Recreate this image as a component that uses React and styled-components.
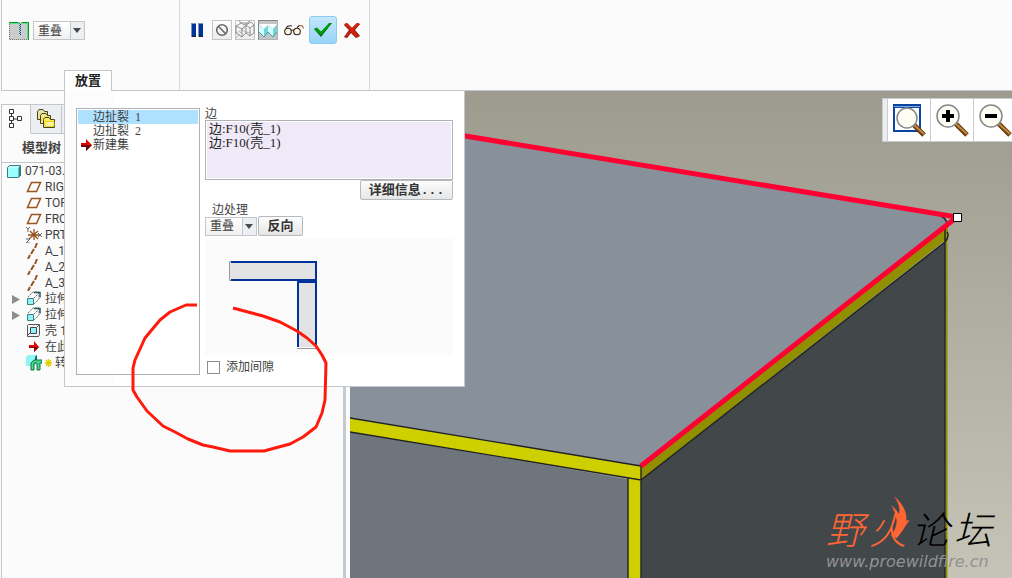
import React from "react";
import styled, { createGlobalStyle, css } from "styled-components";

const line = "#c3c7cc";
const sans = `Roboto, "Noto Sans CJK SC", sans-serif`;
const song = `"Liberation Serif", "Noto Sans CJK SC", serif`;

const Global = createGlobalStyle`
  *, *::before, *::after { box-sizing: border-box; }
  body { margin: 0; background: #fbfbfb; }
  button, select, input { font: inherit; color: inherit; margin: 0; }
  svg { display: block; flex: none; }
`;

const Page = styled.div`
  position: relative;
  display: flex;
  flex-direction: column;
  min-height: 100vh;
  overflow: hidden;
  padding-left: 1px;
  background: #fbfbfb;
  color: #3f3f3f;
  font: 12px/16px ${sans};
`;

const Ribbon = styled.header`
  display: flex;
  border-bottom: 1px solid ${line};
  border-left: 1px solid ${line};
`;

const Group = styled.section`
  display: flex;
  flex-direction: column;
  justify-content: space-between;
  width: ${(p) => p.$width}px;
  height: 90px;
  padding: ${(p) => p.$pad};
  border-right: 1px solid #d6d9dc;
`;

const Controls = styled.div`
  display: flex;
  align-items: center;
  gap: ${(p) => p.$gap}px;
`;

const Tab = styled.button`
  align-self: flex-start;
  width: 48px;
  height: 21px;
  margin: 0 0 -1px 55px;
  padding: 0;
  border: 1px solid ${line};
  border-bottom: 0;
  background: #fff;
  color: #222;
  font: bold 13px/18px ${sans};
`;

const ToolButton = styled.button`
  display: flex;
  align-items: center;
  justify-content: center;
  width: ${(p) => p.$width || 20}px;
  height: 20px;
  padding: 0;
  border: 0;
  background: none;
  ${(p) =>
    p.$look === "framed" &&
    css`
      border: 1px solid #c2c6c9;
      background: linear-gradient(#fdfdfd, #ececec);
    `}
  ${(p) =>
    p.$look === "pressed" &&
    css`
      border: 1px solid #aeb2b5;
      border-top-color: #888;
      border-left-color: #888;
      background: #c3c5c6;
    `}
  ${(p) =>
    p.$look === "accept" &&
    css`
      height: 28px;
      border: 1px solid #8ccaf0;
      border-radius: 3px;
      background: linear-gradient(#c4e6fb, #97d3f8);
    `}
`;

const SelectBox = styled.span`
  display: grid;
  width: 52px;
  height: 19px;
  color: #444;
  > * { grid-area: 1 / 1; }
`;

const SelectInput = styled.select`
  appearance: none;
  padding: 0 0 0 4px;
  border: 1px solid ${line};
  border-radius: 0;
  background: linear-gradient(to right, transparent 36px, ${line} 36px, ${line} 37px, #eceef2 37px),
    linear-gradient(#fff, #f0f0f0);
  line-height: 16px;
`;

const Arrow = styled.svg`
  justify-self: end;
  align-self: center;
  margin-right: 4px;
  pointer-events: none;
`;

const Workspace = styled.main`
  position: relative;
  display: flex;
  flex: 1;
`;

const TreePanel = styled.aside`
  width: 345px;
  flex: none;
  padding-top: 13px;
  border-right: 3px solid #c6cacf;
  background: #fbfbfb;
`;

const TreeBody = styled.div`
  height: 100%;
  border-left: 1px solid ${line};
  border-top: 1px solid ${line};
`;

const TreeTabs = styled.div`
  display: flex;
  height: 29px;
`;

const TreeTab = styled.button`
  display: flex;
  align-items: center;
  justify-content: center;
  width: ${(p) => (p.$active ? 29 : 31)}px;
  padding: 0;
  border: 0;
  border-right: 1px solid ${line};
  border-bottom: 1px solid ${(p) => (p.$active ? "#fbfbfb" : line)};
  background: ${(p) => (p.$active ? "#fbfbfb" : "#eceef1")};
`;

const TreeTitle = styled.h2`
  margin: 0;
  padding: 5px 0 5px 20px;
  border-bottom: 1px solid ${line};
  color: #444;
  font: bold 13px/18px ${sans};
`;

const TreeList = styled.ul`
  margin: 0;
  padding: 0;
  list-style: none;
`;

const TreeRow = styled.li`
  display: flex;
  align-items: center;
  gap: ${(p) => (p.$root ? 4 : 3)}px;
  height: 16px;
  padding-left: ${(p) => (p.$root ? 5 : 10)}px;
  white-space: nowrap;
`;

const Twisty = styled.span`
  display: flex;
  width: 11px;
`;

const Viewport = styled.section`
  position: relative;
  flex: 1;
  min-width: 0;
  margin-left: 4px;
  overflow: hidden;
  background: linear-gradient(#9d9b8e, #c6c3b7);
`;

const Scene = styled.svg`
  position: absolute;
  inset: 0;
  width: 100%;
  height: 100%;
`;

const ViewTools = styled.div`
  position: absolute;
  top: 7px;
  right: 0;
  display: flex;
  width: 130px;
  height: 44px;
  overflow: hidden;
  border: 1px solid #c9ccd3;
  border-right: 0;
  background: #fff;
`;

const Grip = styled.span`
  flex: none;
  width: 4px;
  background: #eeeef2;
`;

const ViewButton = styled.button`
  display: flex;
  align-items: flex-start;
  flex: none;
  width: 43px;
  padding: 5px 0 0 4px;
  border: 0;
  border-left: 1px solid #c9ccd3;
  background: #fff;
`;

const Watermark = styled.div`
  position: absolute;
  right: 20px;
  bottom: 7px;
  width: 166px;
`;

const Brand = styled.div`
  display: flex;
  justify-content: space-between;
  color: #000;
  font: italic 300 38px/44px "Liberation Sans", "Noto Sans CJK SC", sans-serif;
`;

const Flame = styled.svg`
  position: absolute;
  left: 63px;
  top: -13px;
`;

const Fire = styled.span`
  color: #ff6633;
`;

const Site = styled.div`
  color: #929292;
  font: italic 16px/18px "DejaVu Sans", sans-serif;
  white-space: nowrap;
`;

const Dialog = styled.section`
  position: absolute;
  top: 0;
  left: 63px;
  display: flex;
  gap: 5px;
  width: 401px;
  height: 296px;
  padding: 17px 11px 11px;
  border: 1px solid ${line};
  border-top: 0;
  background: linear-gradient(to right, #fcfcfc 50px, #fff 50px);
`;

const SetList = styled.ul`
  width: 124px;
  flex: none;
  margin: 0;
  padding: 1px;
  border: 1px solid #b0b3b6;
  background: #fff;
  list-style: none;
  font: 12px/14px ${song};
`;

const SetItem = styled.li`
  display: flex;
  align-items: center;
  gap: ${(p) => (p.$icon ? 0 : 6)}px;
  height: 14px;
  padding-left: ${(p) => (p.$icon ? 3 : 15)}px;
  background: ${(p) => (p.$selected ? "#aee0ff" : "none")};
`;

const Form = styled.div`
  display: flex;
  flex: 1;
  flex-direction: column;
`;

const Caption = styled.h3`
  margin: 0;
  padding: ${(p) => (p.$inset ? "4px 0 0 7px" : 0)};
  font: 12px/12px ${song};
`;

const EdgeList = styled.ul`
  height: 60px;
  margin: 0;
  padding: 1px 3px;
  border: 1px solid #b0b3b6;
  background: #f0eaf8;
  box-shadow: inset 0 0 0 1px #fff;
  list-style: none;
  color: #222;
  font: 13px/14px ${song};
`;

const PushButton = styled.button`
  width: ${(p) => p.$width}px;
  height: 20px;
  margin-left: ${(p) => (p.$end ? "auto" : 0)};
  padding: 0;
  border: 1px solid #b7babd;
  border-radius: 2px;
  background: linear-gradient(#fdfdfd, #e6e6e6);
  color: #333;
  font: bold 13px/17px "Liberation Mono", "Noto Sans CJK SC", monospace;
`;

const Preview = styled.div`
  height: 117px;
  margin: 2px 0 5px;
  padding: 23px 0 0 24px;
  background: #fbfbfb;
`;

const CheckLabel = styled.label`
  display: flex;
  align-items: center;
  gap: 6px;
  height: 14px;
  padding-left: 2px;
`;

const CheckBox = styled.input`
  appearance: none;
  width: 13px;
  height: 13px;
  border: 1px solid #8e8e8e;
  background: #fff;
`;

const Mark = styled.svg`
  position: absolute;
  left: 130px;
  top: 300px;
  pointer-events: none;
`;

const Down = () => (
  <Arrow width="8" height="5" viewBox="0 0 8 5">
    <path d="M0 0h8L4 5z" fill="#444b52" />
  </Arrow>
);

const Choice = ({ label }) => (
  <SelectBox>
    <SelectInput aria-label={label} defaultValue="重叠">
      <option>重叠</option>
    </SelectInput>
    <Down />
  </SelectBox>
);

const RipIcon = () => (
  <svg width="20" height="18" viewBox="0 0 20 18">
    <path d="M0 0h20v18H0z" fill="#ccc" />
    <path d="M0 .5h9.500M12.500.5h7V18" fill="none" stroke="#0b9a1b" />
    <path d="M0 1.500h9.500l1 1M12.500 1.500h6V17" fill="none" stroke="#5fdc9a" />
    <path d="M.5 2v15.500H19" fill="none" stroke="#777" strokeDasharray="1 1" />
    <path d="M10.500 1v11" stroke="#0b8f87" strokeDasharray="1 1" />
    <path d="M11.500 2v11" stroke="#003399" strokeDasharray="1 1" />
  </svg>
);

const PauseIcon = () => (
  <svg width="12" height="14" viewBox="0 0 12 14">
    <path d="M0 0h5v14H0zM7 0h5v14H7z" fill="#7f93b8" />
    <path d="M1 1h4v13H1zM8 1h4v13H8z" fill="#003399" />
    <path d="M1 13h4v1H1zM8 13h4v1H8z" fill="#222" />
  </svg>
);

const NoneIcon = () => (
  <svg width="14" height="14" viewBox="0 0 14 14" fill="none" stroke="#666" strokeWidth="1.600">
    <circle cx="7" cy="7" r="5.300" />
    <path d="M3.300 3.300l7.400 7.400" />
  </svg>
);

const WireIcon = () => (
  <svg width="20" height="20" viewBox="0 0 20 20" fill="none" stroke="#777" strokeWidth=".8">
    <path d="M1 6l6 3v8l-6-4zM7 9l4-4v8l-4 4M11 5l4 3v8l-4-3M15 8l4-3v8l-4 3" />
    <path d="M1 6l5-3h5M11 5l5-3 3 3M4 1l5 4 6-4" />
    <path d="M1 18L14 2M1 13l6-3 4 2 5 1" stroke="#999" strokeDasharray="2 1" />
  </svg>
);

const ShadeIcon = () => (
  <svg width="18" height="16" viewBox="0 0 18 16">
    <path d="M0 2h18l-4 5-4-4-5 4z" fill="#fff" />
    <path d="M0 3l5 4v8l-5-5zM9 3l5 4v8l-5-5z" fill="#cff" />
    <path d="M5 7l4-4v7l-4 5zM14 7l4-4v7l-4 5z" fill="#76d5d3" />
    <path d="M0 10l5 5 4-5 5 5 4-5" fill="none" stroke="#4a9b9e" />
  </svg>
);

const GlassesIcon = () => (
  <svg width="20" height="12" viewBox="0 0 20 12" fill="none" stroke="#322" strokeWidth="1.100">
    <circle cx="4" cy="7.500" r="3.300" fill="#fff8dd" />
    <circle cx="13" cy="7.500" r="3.300" fill="#fff8dd" />
    <path d="M7 6.500q1.500-1 3 0M2 4q2-3 6-2M13 3.500L15.500 1.500" />
    <path d="M15 1.500q4-.5 4.300 3" stroke="#a15d26" />
  </svg>
);

const CheckIcon = () => (
  <svg width="18" height="14" viewBox="0 0 18 14">
    <path d="M0 6l3-1 4 4 8-9h3L7 14z" fill="#006b0b" />
    <path d="M0 5.500l3-1 4 4L15.500 0H18L7 12z" fill="#009f0c" />
  </svg>
);

const CrossIcon = () => (
  <svg width="16" height="15" viewBox="0 0 16 15">
    <path d="M0 2l3-2 5 5 5-5 3 1-5 6 5 6-4 2-5-5-4 5-3-1 5-7z" fill="#6e1208" />
    <path d="M0 1l3-1 5 5 5-5 3 1-6 6 5 6-3 1-5-5-4 5-2-1 5-6z" fill="#d9200b" />
  </svg>
);

const TreeIcon = () => (
  <svg width="14" height="20" viewBox="0 0 14 20" fill="#fff" stroke="#333">
    <path d="M2.500 5v10M3 10h6" />
    <path d="M.5.5h4v4h-4zM.5 7.500h4v4h-4zM.5 14.500h4v4h-4zM8.500 7.500h4v4h-4z" />
  </svg>
);

const FoldersIcon = () => (
  <svg width="20" height="20" viewBox="0 0 20 20" stroke="#4a431f">
    <path d="M1.500 10.500v-8l1.500-2h4l1.500 2h3v8z" fill="#e9e0a8" />
    <path d="M4.500 14.500v-8l1.500-2h4l1.500 2h3v8z" fill="#f3e67c" />
    <path d="M7.500 18.500v-8l1.500-2h4l1.500 2h4v8z" fill="#ffef54" />
    <path d="M9 12.500h9v5H9z" fill="#fff6a8" stroke="#e3cf1f" />
  </svg>
);

const RedArrow = () => (
  <svg width="12" height="12" viewBox="0 0 12 12">
    <path d="M0 4h5V0l6 6-6 6V8H0z" fill="#e80000" />
    <path d="M0 6h11l-6 6V8H0z" fill="#690a0a" />
  </svg>
);

const PartIcon = () => (
  <svg width="14" height="13" viewBox="0 0 14 13">
    <path d="M.5 2.500l2-2h11v10l-2 2H.5z" fill="#9ff" stroke="#3a7b80" />
    <path d="M11.500 2.500l2-2v10l-2 2z" fill="#287f88" />
    <path d="M2 2h10" stroke="#e9ffff" />
  </svg>
);

const treeIcons = {
  plane: <path d="M5.500 3.500h9l-4 9h-9z" fill="none" stroke="#99531f" strokeWidth="1.500" />,
  csys: (
    <>
      <path d="M2 8h12M8 2v11M4 4l8 8M12 4l-9 8" stroke="#99531f" strokeWidth="1.300" />
      <path d="M0 0l2 2 2-2M2 2v3M12 6l4 4M16 6l-4 4M0 12h4l-4 4h4" fill="none" stroke="#666" />
    </>
  ),
  axis: <path d="M11 0L9 5M8 6l-3 5M4 12l-2 4" stroke="#99531f" strokeWidth="2" />,
  extrude: (
    <>
      <path d="M1.500 7.500h6v6h-6z" fill="#8ff4f4" stroke="#3b8589" />
      <path d="M2 6l5-5h6M8 7l5-5v6l-5 5" fill="none" stroke="#666" strokeDasharray="2 1" />
      <path d="M8 1.500h6v5" fill="none" stroke="#245c60" strokeWidth="1.500" />
    </>
  ),
  shell: (
    <>
      <path d="M1.500 2.500l1-1h11v10l-1 2h-11z" fill="#f2f2f2" stroke="#555" />
      <path d="M4.500 4.500h6v6h-6z" fill="#8ff4f4" stroke="#445" />
      <path d="M1 13l3-3M11 4l2-2" stroke="#555" />
    </>
  ),
  insert: (
    <>
      <path d="M3 6h5V2l5 6-5 5v-4H3z" fill="#e80000" />
      <path d="M3 8h10l-5 5V9H3z" fill="#8a0a0a" />
    </>
  ),
  sheet: (
    <>
      <path d="M0 2l2-2h9v8l-2 3H0z" fill="#8ff4f4" />
      <path d="M9 2l2-2v8H9z" fill="#17676f" />
      <path d="M5 8l3-3h8v3h-2v7h-3V8H8v7H5z" fill="#49d690" stroke="#12733f" />
    </>
  ),
};

const rows = [
  ["plane", "RIG"],
  ["plane", "TOP"],
  ["plane", "FRO"],
  ["csys", "PRT"],
  ["axis", "A_1"],
  ["axis", "A_2"],
  ["axis", "A_3"],
  ["extrude", "拉伸", true],
  ["extrude", "拉伸", true],
  ["shell", "壳 1"],
  ["insert", "在此"],
  ["sheet", "转"],
];

const Lens = ({ x, y, r }) => (
  <>
    <path d="M21 20l11 11" stroke="#6b3b13" strokeWidth="5" />
    <path d="M21 20l11 10" stroke="#c08b3a" strokeWidth="2" />
    <circle cx={x} cy={y} r={r} fill="#fdfdf4" stroke="#888" strokeWidth="1.500" />
  </>
);

const FitIcon = () => (
  <svg width="34" height="33" viewBox="0 0 34 33">
    <path d="M2 1h26v26H2z" fill="#fff" stroke="#0b45a3" strokeWidth="2" />
    <path d="M2 2.500h26" stroke="#7ea6dd" />
    <path d="M2 3.500h26" stroke="#0b45a3" />
    <Lens x={15} y={14} r={10} />
  </svg>
);

const ZoomIcon = ({ plus }) => (
  <svg width="34" height="33" viewBox="0 0 34 33">
    <Lens x={13} y={12} r={11} />
    <path d={plus ? "M7 12h12M13 6v12" : "M7 12h12"} stroke="#000" strokeWidth="4" />
  </svg>
);

export default function App() {
  return (
    <Page>
      <Global />
      <Ribbon>
        <Group $width={178} $pad="21px 0 0 7px">
          <Controls $gap={4}>
            <RipIcon />
            <Choice label="类型" />
          </Controls>
          <Tab>放置</Tab>
        </Group>
        <Group $width={190} $pad="16px 0 0 5px">
          <Controls $gap={3}>
            <ToolButton $width={24} aria-label="暂停"><PauseIcon /></ToolButton>
            <ToolButton $look="framed" aria-label="无预览"><NoneIcon /></ToolButton>
            <ToolButton $look="framed" aria-label="分离"><WireIcon /></ToolButton>
            <ToolButton $look="pressed" aria-label="连接"><ShadeIcon /></ToolButton>
            <ToolButton $width={25} aria-label="预览"><GlassesIcon /></ToolButton>
            <ToolButton $width={28} $look="accept" aria-label="确定"><CheckIcon /></ToolButton>
            <ToolButton $width={24} aria-label="取消"><CrossIcon /></ToolButton>
          </Controls>
        </Group>
      </Ribbon>

      <Workspace>
        <TreePanel>
          <TreeBody>
            <TreeTabs>
              <TreeTab $active aria-label="模型树"><TreeIcon /></TreeTab>
              <TreeTab aria-label="文件夹"><FoldersIcon /></TreeTab>
              <TreeTab aria-label="收藏夹" />
            </TreeTabs>
            <TreeTitle>模型树</TreeTitle>
            <TreeList>
              <TreeRow $root><PartIcon />071-03.P</TreeRow>
              {rows.map(([icon, name, closed], i) => (
                <TreeRow key={i}>
                  <Twisty>
                    {closed && (
                      <svg width="8" height="9" viewBox="0 0 8 9"><path d="M0 0l8 4.500L0 9z" fill="#8d8d8d" /></svg>
                    )}
                  </Twisty>
                  <svg width="16" height="16" viewBox="0 0 16 16">{treeIcons[icon]}</svg>
                  {icon === "sheet" && (
                    <svg width="7" height="8" viewBox="0 0 7 8"><path d="M3.500 0v8M0 4h7M1 1l5 6M6 1L1 7" stroke="#e0d000" strokeWidth="1.300" /></svg>
                  )}
                  {name}
                </TreeRow>
              ))}
            </TreeList>
          </TreeBody>
        </TreePanel>

        <Viewport>
          <Scene viewBox="350 91 662 487" preserveAspectRatio="xMinYMin slice">
            <path d="M350 117L944 215l3 12L641 466 350 418z" fill="#88909a" />
            <path d="M350 432l278 47v99H350z" fill="#6e757d" />
            <path d="M350 418l291 48v14l-291-48z" fill="#cfcf00" />
            <path d="M628 478l13 2v98h-13z" fill="#cfcf00" />
            <path d="M641 466L945 226l3 0v12L641 480z" fill="#8f8f00" />
            <path d="M641 480l304-238v336H641z" fill="#42474a" />
            <path d="M946.500 230v348" stroke="#8f8f00" strokeWidth="2" />
            <path d="M350 418l291 48M350 432l291 48 304-238M641 466v112M628 478v100M945 228v350M941 216q6 3 6 9M947 232q3 4-2 10" fill="none" stroke="#202325" strokeWidth="1.400" />
            <path d="M350 117l607 100-316 249" fill="none" stroke="#ff0033" strokeWidth="5" />
            <path d="M953.500 213.500h8v8h-8z" fill="#fff" stroke="#000" />
          </Scene>
          <ViewTools>
            <Grip />
            <ViewButton aria-label="重新调整"><FitIcon /></ViewButton>
            <ViewButton aria-label="放大"><ZoomIcon plus /></ViewButton>
            <ViewButton aria-label="缩小"><ZoomIcon /></ViewButton>
          </ViewTools>
          <Watermark>
            <Brand>
              <Fire>野</Fire>
              <Fire>火</Fire>
              <span>论</span>
              <span>坛</span>
            </Brand>
            <Flame width="20" height="44" viewBox="0 0 20 44">
              <path d="M5 0c9 8 14 17 12 27-1 6-5 9-9 15l-6-2c4-6 7-12 5-19Q6 15 2 9q5 4 8 9Q12 10 5 0z" fill="#ff6633" />
            </Flame>
            <Site>www.proewildfire.cn</Site>
          </Watermark>
        </Viewport>

        <Dialog aria-label="放置">
          <SetList>
            <SetItem $selected><span>边扯裂</span><span>1</span></SetItem>
            <SetItem><span>边扯裂</span><span>2</span></SetItem>
            <SetItem $icon><RedArrow />新建集</SetItem>
          </SetList>
          <Form>
            <Caption>边</Caption>
            <EdgeList>
              <li>边:F10(壳_1)</li>
              <li>边:F10(壳_1)</li>
            </EdgeList>
            <PushButton $width={93} $end>详细信息...</PushButton>
            <Caption $inset>边处理</Caption>
            <Controls $gap={1}>
              <Choice label="边处理" />
              <PushButton $width={45}>反向</PushButton>
            </Controls>
            <Preview>
              <svg width="88" height="88" viewBox="0 0 88 88">
                <path d="M1 1h86v18H1zM69 20h18v66H69z" fill="#e3e3e3" />
                <path d="M2 1h85v85M2 19h85M68 21h19M69 21v65" fill="none" stroke="#003399" strokeWidth="2" />
                <path d="M2 .5H.5v19H2M68 87.500h19" fill="none" stroke="#999" />
              </svg>
            </Preview>
            <CheckLabel><CheckBox type="checkbox" />添加间隙</CheckLabel>
          </Form>
        </Dialog>
      </Workspace>

      <Mark width="200" height="156" viewBox="130 300 200 156">
        <path
          d="M197 305H186L170 312 160 320 145 338 140 349 135 360 133 368V390L137 397 147 411 163 426 175 432 188 439 203 445 213 447 230 451H264L275 448 290 444 303 437 316 427 322 413 325 400 326 363 322 355 316 346 307 338 297 331 280 322 263 316 248 312 233 308"
          fill="none"
          stroke="#ff1a0d"
          strokeWidth="3"
          strokeLinejoin="round"
        />
      </Mark>
    </Page>
  );
}
